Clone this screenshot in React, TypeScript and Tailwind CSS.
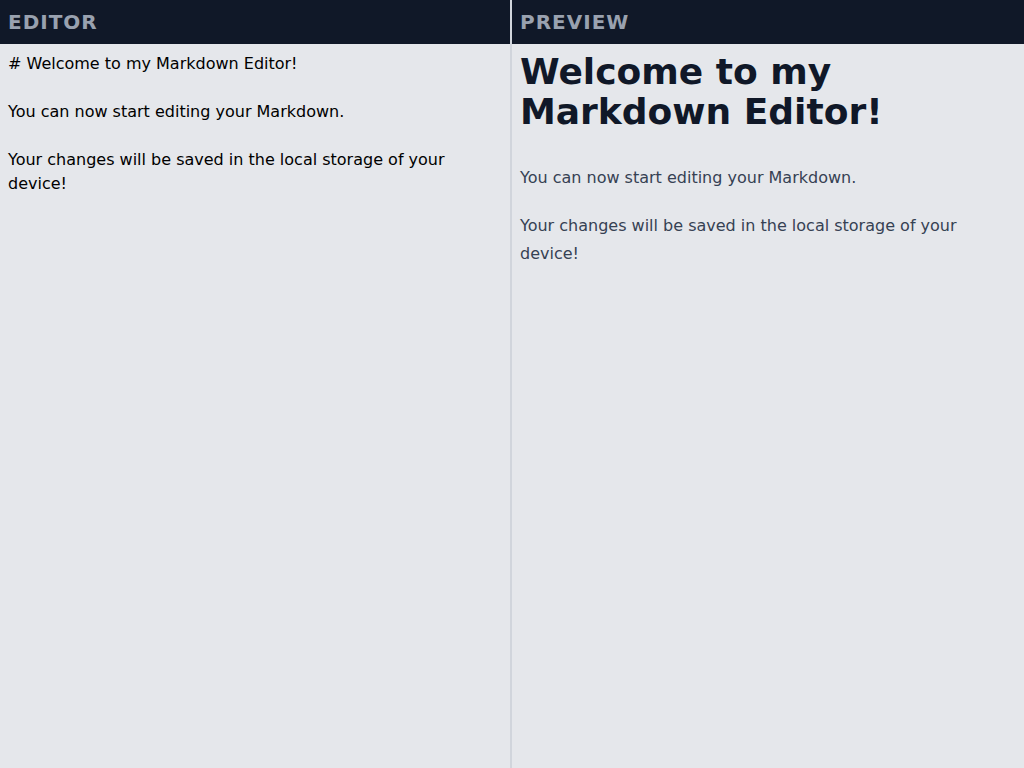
import { useState } from "react";

const INITIAL = `# Welcome to my Markdown Editor!

You can now start editing your Markdown.

Your changes will be saved in the local storage of your device!`;

type Block = { kind: "h1" | "h2" | "p"; text: string };

function parse(md: string): Block[] {
  return md
    .split(/\n{2,}/)
    .map((chunk) => chunk.trim())
    .filter(Boolean)
    .map((chunk) => {
      if (chunk.startsWith("## ")) return { kind: "h2" as const, text: chunk.slice(3) };
      if (chunk.startsWith("# ")) return { kind: "h1" as const, text: chunk.slice(2) };
      return { kind: "p" as const, text: chunk };
    });
}

const FONT = "font-['DejaVu_Sans',sans-serif]";

export default function App() {
  const [value, setValue] = useState(INITIAL);
  const blocks = parse(value);

  return (
    <div className={`flex h-screen w-full bg-gray-200 ${FONT}`}>
      <section className="flex w-1/2 flex-col border-r-2 border-gray-300">
        <header className="bg-gray-900 px-2 py-2">
          <h2 className="text-xl font-bold uppercase leading-7 tracking-wider text-gray-400">Editor</h2>
        </header>
        <textarea
          autoFocus
          value={value}
          onChange={(e) => setValue(e.target.value)}
          spellCheck={false}
          className="flex-1 resize-none bg-transparent p-2 text-base leading-6 text-black outline-none"
        />
      </section>

      <section className="flex w-1/2 flex-col">
        <header className="bg-gray-900 px-2 py-2">
          <h2 className="text-xl font-bold uppercase leading-7 tracking-wider text-gray-400">Preview</h2>
        </header>
        <div className="flex-1 overflow-auto p-2">
          {blocks.map((b, i) =>
            b.kind === "h1" ? (
              <h1 key={i} className="mb-8 text-4xl font-extrabold leading-10 text-gray-900">
                {b.text}
              </h1>
            ) : b.kind === "h2" ? (
              <h2 key={i} className="mb-4 mt-8 text-2xl font-bold text-gray-900">
                {b.text}
              </h2>
            ) : (
              <p key={i} className="my-5 text-base leading-7 text-gray-700 first:mt-0">
                {b.text}
              </p>
            ),
          )}
        </div>
      </section>
    </div>
  );
}
